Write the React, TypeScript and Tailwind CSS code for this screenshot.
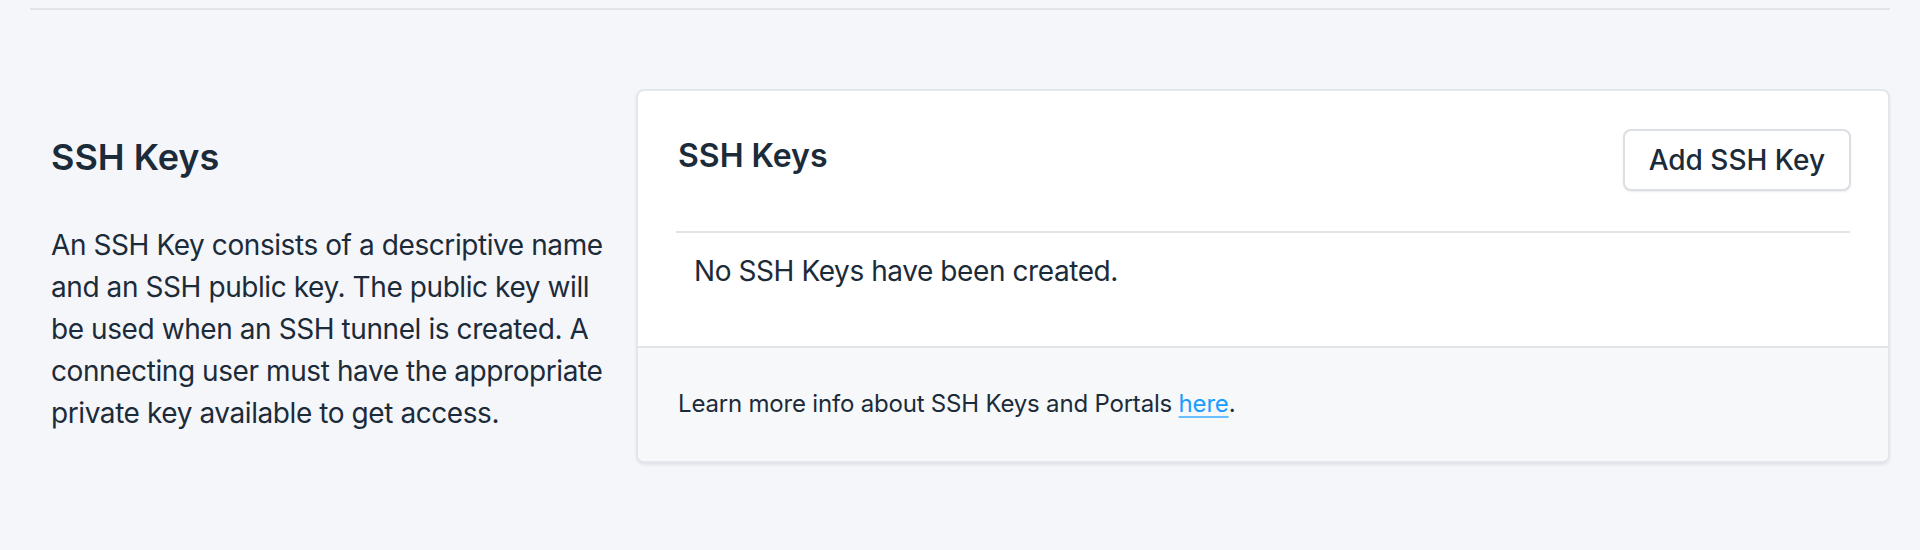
export default function App() {
  return (
    <div
      className="min-h-[550px] bg-[#f5f6fa] text-[#1c2b39]"
      style={{ fontFamily: 'Inter, "Noto Sans", sans-serif' }}
    >
      <div className="mx-[30px] pt-2">
        {/* Top rule */}
        <div className="border-t-2 border-[#e1e4e8]" />

        <div className="mt-[79px] flex items-start">
          {/* Description column */}
          <div className="w-[606px] shrink-0 pl-[21px] pr-[22px]">
            <h2 className="mt-[46px] text-[36px] leading-[44px] font-semibold">SSH Keys</h2>
            <p className="mt-[45px] text-[28px] leading-[42px] tracking-[-0.015em]">
              An SSH Key consists of a descriptive name and an SSH public key. The public key will be used when an SSH
              tunnel is created. A connecting user must have the appropriate private key available to get access.
            </p>
          </div>

          {/* Card */}
          <div className="flex-1 overflow-hidden rounded-lg border-2 border-[#e3e6ea] bg-white shadow-[0_2px_3px_rgba(0,0,0,0.08)]">
            <div className="mx-[38px] flex items-start justify-between border-b-2 border-[#e1e4e8] pt-[38px] pb-[40px]">
              <h3 className="mt-[7px] pl-0.5 text-[32px] leading-[40px] font-semibold">SSH Keys</h3>
              <button className="mr-[-1px] h-[62px] rounded-lg border-2 border-[#dcdfe3] bg-white px-[24px] text-[28px] font-medium shadow-[0_1px_2px_rgba(0,0,0,0.08)]">
                Add SSH Key
              </button>
            </div>
            <div className="px-[56px] pt-[17px] pb-[54px] text-[28px] leading-[42px] tracking-[-0.015em]">
              No SSH Keys have been created.
            </div>
            <div className="border-t-2 border-[#e1e4e8] bg-[#f6f8fa] px-[40px] pt-[38px] pb-[39px] text-[24px] leading-[36px] tracking-[-0.008em]">
              Learn more info about SSH Keys and Portals{' '}
              <a href="#" className="text-[#1a9dff] underline decoration-[#6cbfff] decoration-2 underline-offset-4">
                here
              </a>
              .
            </div>
          </div>
        </div>
      </div>
    </div>
  )
}
